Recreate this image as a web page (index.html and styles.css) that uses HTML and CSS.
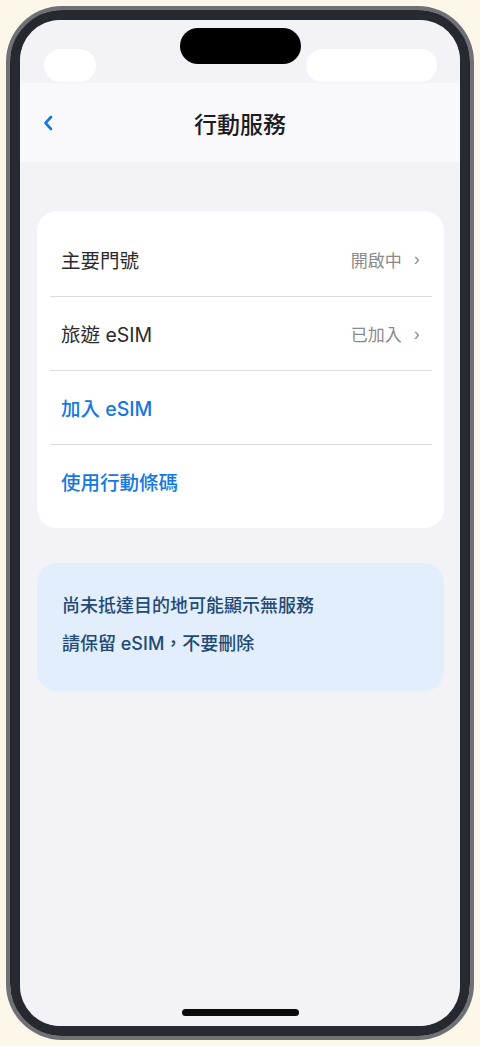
FILE: index.html
```html
<!DOCTYPE html>
<html lang="zh-Hant">
<head>
  <meta charset="UTF-8" />
  <meta name="viewport" content="width=device-width, initial-scale=1.0" />
  <title>行動服務</title>
  <link rel="stylesheet" href="styles.css">
</head>
<body>
  <div class="phone">
    <div class="screen">
      <div class="status-bar">
        <div class="island"></div>
        <span class="pill pill-left"></span>
        <span class="pill pill-right"></span>
      </div>

      <header class="nav">
        <a class="back" href="#" aria-label="返回">
          <svg width="10" height="16" viewBox="0 0 10 16">
            <polyline points="8,2 2.5,8 8,14" fill="none" stroke="#1677e0" stroke-width="2.6" stroke-linecap="round" stroke-linejoin="round" />
          </svg>
        </a>
        <h1>行動服務</h1>
        <span></span>
      </header>

      <main class="content">
        <section class="card">
          <div class="row">
            <span class="label">主要門號</span>
            <span class="value">開啟中<span class="chev">›</span></span>
          </div>
          <div class="row">
            <span class="label">旅遊 eSIM</span>
            <span class="value">已加入<span class="chev">›</span></span>
          </div>
          <div class="row">
            <span class="label link">加入 eSIM</span>
          </div>
          <div class="row">
            <span class="label link">使用行動條碼</span>
          </div>
        </section>

        <section class="notice">
          <p>尚未抵達目的地可能顯示無服務</p>
          <p>請保留 eSIM，不要刪除</p>
        </section>
      </main>

      <div class="home-bar"></div>
    </div>
  </div>
</body>
</html>
```

FILE: styles.css
```css
body {
  margin: 0;
  background: #fdf7e9;
  font-family: 'Inter', 'Noto Sans CJK TC', sans-serif;
  color: #1c1c1e;
}

.phone {
  box-sizing: border-box;
  width: 460px;
  height: 1026px;
  margin: 10px;
  border: 10px solid #262a30;
  border-radius: 52px;
  box-shadow: 0 0 0 4px #6e7175;
}

.screen {
  height: 100%;
  border-radius: 40px;
  overflow: hidden;
  background: #f2f2f7;
  display: flex;
  flex-direction: column;
}

.status-bar {
  position: relative;
  height: 63px;
  padding: 29px 23px 0 24px;
  box-sizing: border-box;
  display: flex;
  justify-content: space-between;
}

.island {
  position: absolute;
  top: 8px;
  left: 160px;
  width: 121px;
  height: 36px;
  border-radius: 18px;
  background: #000;
}

.pill {
  height: 33px;
  border-radius: 17px;
  background: #fff;
}

.pill-left {
  width: 52px;
}

.pill-right {
  width: 131px;
}

.nav {
  height: 79px;
  background: #f9f9fb;
  display: grid;
  grid-template-columns: 1fr auto 1fr;
  align-items: center;
  padding: 0 24px;
}

.nav h1 {
  margin: 0;
  font-size: 23px;
  font-weight: 500;
  color: #1c1c1e;
}

.back {
  display: flex;
  align-items: center;
  margin-left: -1px;
}

.content {
  flex: 1;
  padding: 49px 16px 0 17px;
}

.card {
  background: #fff;
  border-radius: 20px;
  padding: 11px 0 10px;
}

.row {
  box-sizing: border-box;
  height: 74px;
  margin: 0 12px 0 13px;
  padding: 0 12px 0 11px;
  display: flex;
  align-items: center;
  justify-content: space-between;
}

.row + .row {
  border-top: 1px solid #dcdce0;
}

.label {
  font-size: 19.5px;
  color: #2a2a2c;
}

.label.link {
  color: #1677e0;
  font-weight: 500;
}

.value {
  font-size: 17px;
  color: #8a8a8e;
  display: flex;
  align-items: center;
}

.chev {
  margin-left: 12px;
  font-size: 16px;
  color: #8a8a8e;
}

.notice {
  margin-top: 35px;
  background: #e2eefb;
  border-radius: 20px;
  padding: 24px 25px 28px;
}

.notice p {
  margin: 0;
  line-height: 38px;
  font-size: 18px;
  font-weight: 500;
  color: #1f4a77;
}

.home-bar {
  width: 117px;
  height: 7px;
  border-radius: 4px;
  background: #0a0a0a;
  margin: 0 auto 10px;
}
```
